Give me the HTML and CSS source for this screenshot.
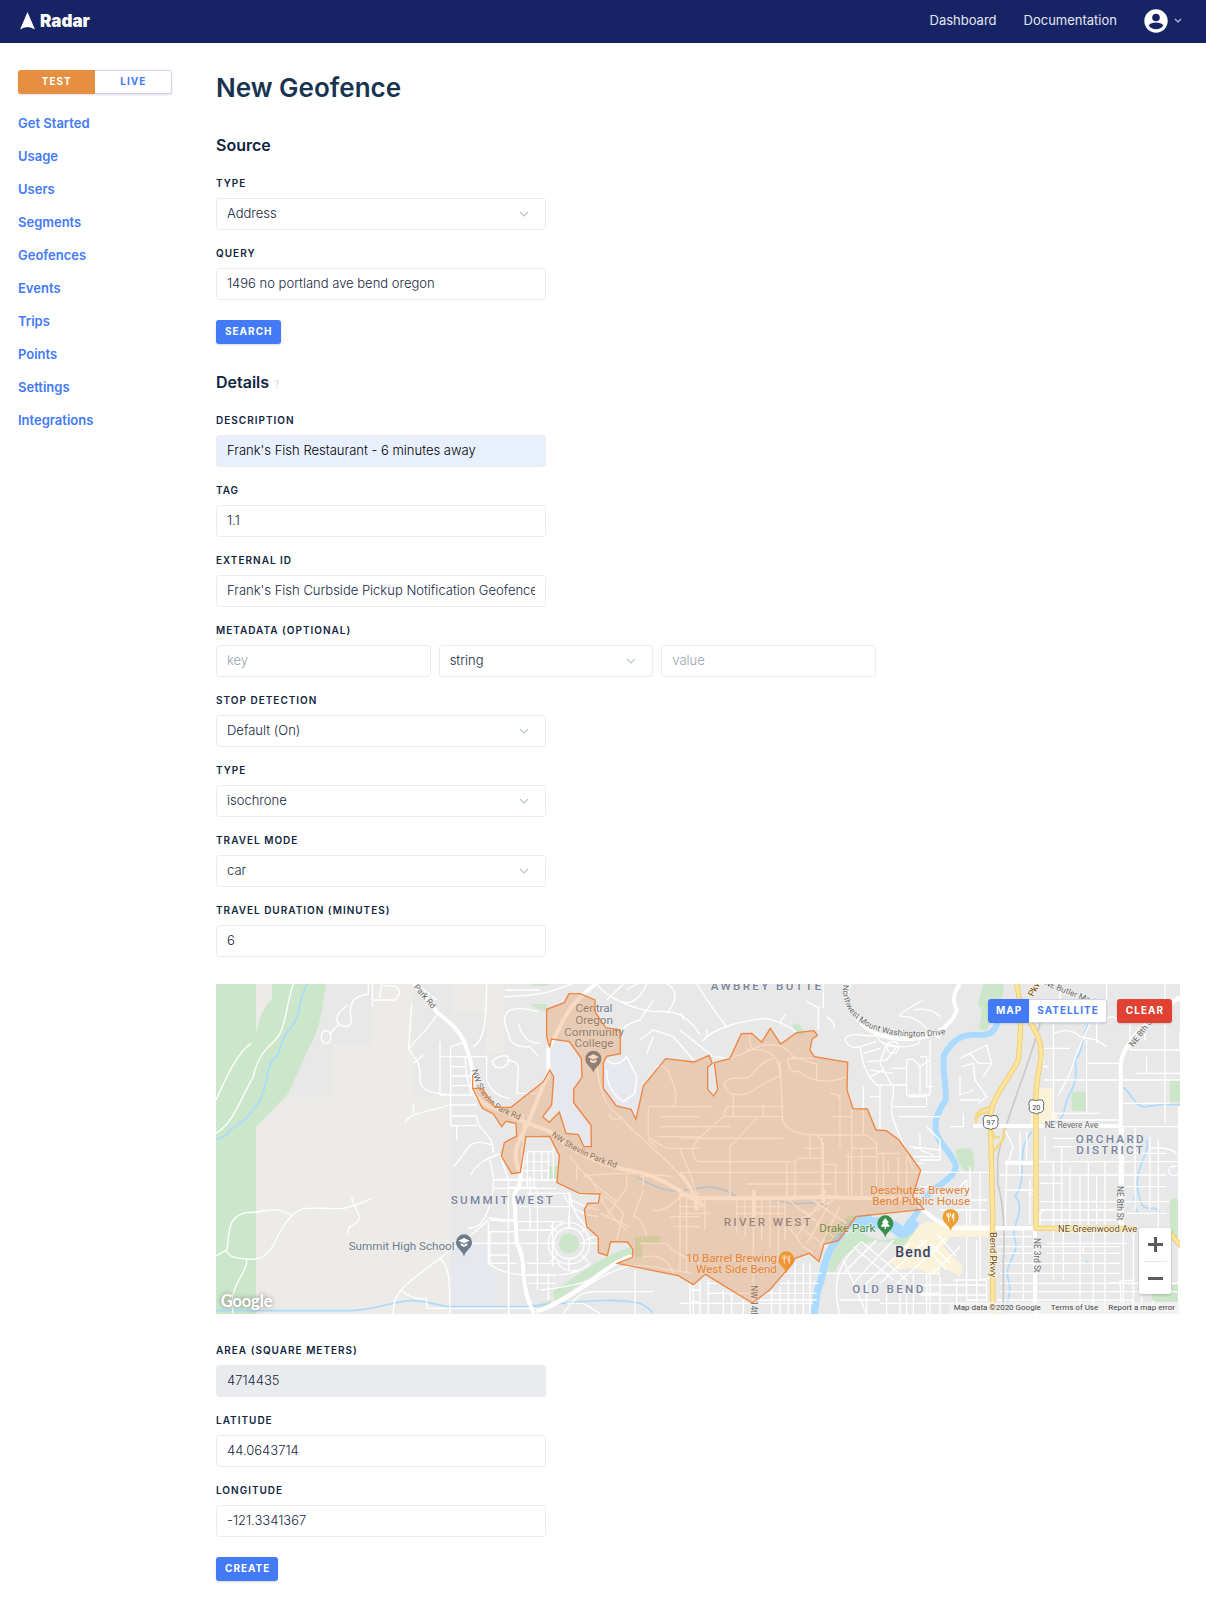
FILE: index.html
```html
<!DOCTYPE html>
<html lang="en">
<head>
  <meta charset="UTF-8" />
  <meta name="viewport" content="width=device-width, initial-scale=1.0" />
  <title>Radar - New Geofence</title>
  <link rel="stylesheet" href="styles.css">
</head>
<body>
  <header class="topbar">
    <a class="logo" href="#">
      <svg width="15" height="18" viewBox="0 0 15 18"><path d="M7.500 0L15 17.5Q7.500 12.500 0 17.500Z" fill="#fff"/></svg>
      Radar
    </a>
    <nav class="topnav">
      <a href="#">Dashboard</a>
      <a href="#">Documentation</a>
      <button class="account" aria-label="Account">
        <svg width="24" height="24" viewBox="0 0 24 24"><circle cx="12" cy="12" r="11.700" fill="#fff"/><circle cx="12" cy="8.500" r="3.800" fill="#162466"/><path d="M4.700 16.500C6 14.300 9 13.500 12 13.500s6 .8 7.300 3C17.500 19 15 20.300 12 20.300S6.500 19 4.700 16.500z" fill="#162466"/></svg>
        <svg width="8" height="5" viewBox="0 0 8 5"><path d="M1 1l3 3 3-3" fill="none" stroke="#b9bfdb" stroke-width="1.200"/></svg>
      </button>
    </nav>
  </header>

  <div class="page">
    <aside class="sidebar">
      <div class="toggle env">
        <button class="test">Test</button>
        <button>Live</button>
      </div>
      <nav class="sidenav">
        <a href="#">Get Started</a>
        <a href="#">Usage</a>
        <a href="#">Users</a>
        <a href="#">Segments</a>
        <a href="#">Geofences</a>
        <a href="#">Events</a>
        <a href="#">Trips</a>
        <a href="#">Points</a>
        <a href="#">Settings</a>
        <a href="#">Integrations</a>
      </nav>
    </aside>

    <main>
      <h1>New Geofence</h1>

      <h2>Source</h2>
      <div class="field">
        <label for="source">Type</label>
        <div class="select">
          <select id="source"><option>Address</option></select>
          <svg class="chevron" viewBox="0 0 10 6"><path d="M1 1l4 4 4-4"/></svg>
        </div>
      </div>
      <div class="field">
        <label for="query">Query</label>
        <input id="query" type="text" value="1496 no portland ave bend oregon">
      </div>
      <button class="btn">Search</button>

      <h2 class="details">Details <span class="help">?</span></h2>
      <div class="field">
        <label for="description">Description</label>
        <input id="description" class="autofilled" type="text" value="Frank's Fish Restaurant - 6 minutes away">
      </div>
      <div class="field">
        <label for="tag">Tag</label>
        <input id="tag" type="text" value="1.1">
      </div>
      <div class="field">
        <label for="externalId">External ID</label>
        <input id="externalId" type="text" value="Frank's Fish Curbside Pickup Notification Geofence">
      </div>
      <div class="field wide">
        <label for="metaKey">Metadata (optional)</label>
        <div class="metadata">
          <input id="metaKey" type="text" placeholder="key">
          <div class="select">
            <select aria-label="Metadata type"><option>string</option></select>
            <svg class="chevron" viewBox="0 0 10 6"><path d="M1 1l4 4 4-4"/></svg>
          </div>
          <input type="text" placeholder="value" aria-label="Metadata value">
        </div>
      </div>
      <div class="field">
        <label for="stopDetection">Stop Detection</label>
        <div class="select">
          <select id="stopDetection"><option>Default (On)</option></select>
          <svg class="chevron" viewBox="0 0 10 6"><path d="M1 1l4 4 4-4"/></svg>
        </div>
      </div>
      <div class="field">
        <label for="shape">Type</label>
        <div class="select">
          <select id="shape"><option>isochrone</option></select>
          <svg class="chevron" viewBox="0 0 10 6"><path d="M1 1l4 4 4-4"/></svg>
        </div>
      </div>
      <div class="field">
        <label for="mode">Travel Mode</label>
        <div class="select">
          <select id="mode"><option>car</option></select>
          <svg class="chevron" viewBox="0 0 10 6"><path d="M1 1l4 4 4-4"/></svg>
        </div>
      </div>
      <div class="field">
        <label for="duration">Travel Duration (minutes)</label>
        <input id="duration" type="text" value="6">
      </div>

      <div class="map">
        <svg class="map-canvas" viewBox="0 0 2892 990">
          <defs>
            <g id="pin"><path d="M0 64C-4 44-24 42-24 21A24 24 0 0 1 24 21C24 42 4 44 0 64z"/></g>
            <g id="cap" fill="#fff"><path d="M0 8l17 8-17 8-17-8z"/><path d="M-10 23l10 5 10-5v7q-10 8-20 0z"/></g>
            <g id="fork" stroke="#fff" stroke-width="3" fill="none"><path d="M-11 9v9q5 4 10 0V9M-6 9v25M9 34V10q-6 4-4 14h4"/></g>
          </defs>

          <!-- land, parks -->
          <rect width="2892" height="990" fill="#e8e8e8"/>
          <g transform="translate(-18 -12)">
            <path class="sand" d="M485 12H610V350H725V1002H138V440L235 350H365V195H485zM728 12h155v210H828V95H728z"/>
            <path class="park" d="M18 12H348C335 110 320 170 300 195L235 340L138 440V1002H18z"/>
            <path class="sand" d="M138 12h48v45q-35 30-48 105z"/>
            <path class="campus" d="M722 790h112v70h30v142H722z"/>
            <path class="water" d="M292 12C265 50 275 110 240 145C200 190 225 210 183 245C165 300 165 350 135 380C110 430 60 440 50 465L18 480M18 992H420C500 990 560 960 610 962C670 965 690 980 725 980H980"/>
          </g>
          <g transform="translate(672 -12)">
            <path class="campus" d="M334 177L388 185L430 240L401 340L453 436L454 500L400 470L350 400L330 280zM500 235L560 230L605 330L588 418L530 378L490 325z"/>
            <path class="park" d="M275 12h55l-10 6h-40zM272 72h48v20q-30-2-48-20zM328 558h24v42h-24zM585 770h22v62h-22zM609 768h52v25h-52zM338 935C420 880 500 820 577 800V830C500 850 400 925 345 965zM290 975l45-14-6 16-30 10z"/>
            <path class="water" d="M270 977C400 970 500 950 600 970q25 12 40 30M590 590C650 625 690 640 740 630S830 610 890 650M990 655q60 20 100 15t80 10"/>
          </g>
          <g transform="translate(1392 -12)">
            <path class="park" d="M335 135l20-4 22 28-18 10zM442 875C460 800 480 780 530 740C560 780 600 785 650 775L730 740L690 815L640 790C560 770 490 810 465 875z"/>
            <path class="park" d="M440 785l90-75-20-5-80 60z"/>
            <path class="town" d="M730 735l50-15v170l-90-30z"/>
            <path class="river" d="M402 1002C410 960 405 940 422 905C435 850 440 810 480 770C500 735 530 715 575 712" stroke-width="22"/>
            <path class="river" d="M530 722C580 735 610 720 650 745Q668 770 690 740L705 720" stroke-width="34"/>
          </g>
          <g transform="translate(2112 -12)">
            <path class="park" d="M190 12h62q0 60-55 140l-20-5 10-55-14-20zM455 335h42v58h-42zM750 298h30v68h-30zM108 508l45-4q14 25 8 70l-24 2q-30-30-29-68zM750 656h30v140l-30-30zM695 925l50-10h35v50h-85zM-10 740l18 5-12 20z"/>
            <path class="town" d="M350 325h47v75h15v30h-80v-27h18zM0 735l20-10 30 10h160v35H90L70 800l60 60-10 30L50 850-60 870l-30-20z"/>
            <path class="campus" d="M745 550l35-20v90l-30 5z"/>
            <path class="river" d="M235 120C225 160 205 165 180 165C130 160 100 175 72 225C65 270 80 310 77 360C50 400 40 430 50 460C60 500 100 520 108 560C100 600 50 610 10 660C-10 700-20 720-40 735" stroke-width="18"/>
            <path class="water" d="M520 110C480 160 495 210 465 240C475 300 460 320 445 350S440 410 405 430M335 455C300 500 310 520 305 590S270 640 295 660C310 710 270 740 285 780S250 850 265 900S250 960 270 990M608 322C640 340 640 385 680 380S730 370 780 375M680 480C690 530 640 560 655 640S700 660 720 700M645 640q-10 30 10 60"/>
            <path d="M492 840l12 5-2 5z" fill="#aadaff"/>
          </g>

          <!-- streets -->
          <g class="street" transform="translate(-18 -12)">
            <path d="M18 360C50 290 80 220 123 190M18 460C70 430 90 360 130 290C150 200 190 200 210 160S225 90 250 12M475 12V42C430 50 425 60 420 95C430 130 420 145 395 138C370 125 380 95 415 75M390 130L360 160M335 170a14 16 0 1 0 27 0a14 14 0 1 0-27 0M487 12V80M487 60H555L570 40L562 20L515 16L508 55M620 12L680 60M680 105C640 170 600 190 597 210C620 240 630 240 630 300C635 340 680 340 722 345M595 210L605 75M640 225L610 250M585 430C600 390 680 395 722 372M610 370V400M830 12C828 90 830 180 790 200M722 200L770 185M722 200V437M690 345H722M690 185V345M725 260H770M725 288H785M690 230H830M725 317H785M722 345H790M722 375H800M722 408H800M722 437H800M765 230L770 288L785 345M740 437V480M800 408C800 460 850 450 850 520M730 560C770 520 770 485 810 487L850 495M782 585C800 550 830 535 870 522L885 570L895 600V750M838 540C860 600 850 650 830 700S790 740 775 745M855 598H980M898 622H980M18 828C35 820 40 812 50 812C55 830 70 835 130 838C200 830 190 760 245 708C280 670 320 690 400 685C430 680 450 670 485 655M50 812C60 770 45 710 110 697C150 703 200 670 245 708M425 650C430 690 470 710 430 735Q410 740 415 760M110 838C115 880 50 920 70 1000M550 1002C545 930 600 905 690 835L790 760L835 720M690 835C715 860 720 880 720 1002M575 930Q600 960 650 955V985H980M835 725V850C870 880 940 890 990 885M835 755H915M780 790H915M835 825H897V1002M830 712Q890 720 915 720M960 590V750M830 230V300Q850 350 900 355M845 245a20 20 0 1 0 50-15Q870 220 845 245M890 240Q930 245 925 270L920 340H990M985 95Q850 60 895 160Q900 205 960 200L985 230M925 130Q940 190 990 190M885 30H990M940 560V400"/>
          </g>
          <g class="street" transform="translate(672 -12)">
            <path d="M190 50C270 45 300 50 400 10M470 10C500 60 600 90 640 95C700 90 740 100 780 165M550 12L500 60M590 12L560 30M620 12Q590 80 545 65M640 60Q620 90 600 120Q560 130 540 155M600 180L640 150 700 170 760 240M680 100Q730 40 680 12M640 170L620 220M500 240Q520 260 545 245L560 230L590 290 585 340 550 365Q500 330 500 270M470 250C480 350 500 380 540 410C600 480 680 530 740 610L770 650M510 400a20 12 0 1 0 40 10M625 380V480L650 500M625 380H780M660 410H780M660 440H780M650 470H780M630 475L680 505H780M650 260Q680 250 690 290Q720 350 700 380M245 500V600M262 515H340M262 515V630M282 515V620M305 515V600M325 515V600M340 500V600M245 545H330M245 572H330M160 600H350M160 625H350M260 640H390M240 680H390M235 725H370M235 750H350M292 630V930M338 725V860M388 640V740M150 755H230M150 720L230 725M145 790H350M150 755V850H230M205 755V1002M235 790H340M260 850H360M260 885H350M265 910H350M325 880V960M410 640L480 640M370 640Q390 700 475 710M395 660Q430 680 475 690M390 640Q395 700 440 740M420 790H475M430 790Q440 770 480 770M352 850Q380 880 410 870M355 885Q420 880 450 850M390 530Q440 600 530 665L560 625V580M440 580Q470 620 490 665Q510 710 560 750M470 640Q510 650 550 700L530 780M410 560V600M430 590Q470 580 600 580M490 660L440 690M480 700L570 740M530 665L500 710M610 630L580 710Q610 715 620 770M640 690Q670 700 720 650L780 640M610 580V620M600 590Q640 580 700 590M290 1000C400 960 450 900 530 870C600 840 660 870 760 880M370 1000C420 930 440 935 480 935H640M585 870V1002M750 900V1002M750 930H780M750 965H780M380 970H430L480 1000M300 930Q400 920 450 900M600 790H680Q700 820 780 850M610 830Q680 820 700 880M720 640V780M740 640V880M690 710H780M700 740H780"/>
            <circle cx="387" cy="790" r="46" fill="none"/><circle cx="387" cy="790" r="62" fill="none"/><path d="M387 708v36M387 836v36M325 790h18M433 790h30M330 735l20 20M425 755l20-20M350 825l-20 20M425 825l20 20"/>
            <circle class="park" cx="387" cy="790" r="30"/>
          </g>
          <g class="street" transform="translate(1392 -12)">
            <path d="M0 150L100 230 150 236M65 185C100 140 200 120 260 115Q320 130 350 158M80 170V150M50 12Q100 90 140 140M0 100Q10 110 10 120M430 12V85M320 100L300 125M420 85L380 65M415 85V150M440 110Q470 130 460 145M210 160Q205 180 215 205M150 236C220 210 240 190 280 195Q310 190 340 230L400 250H410V300M325 235H400M325 235Q320 280 360 275C400 320 480 300 500 290M300 240L308 420Q320 460 400 465H560L590 490V650M200 210C280 200 300 240 300 290C240 300 220 360 150 340C110 300 150 290 200 295C230 280 230 250 280 235M160 340V410M250 370V410M0 380H95M140 380H310M140 380L130 410H310M0 440H150M0 475H310M235 410L150 500V650M130 410C60 470 35 490 38 520Q45 545 60 545H345L360 530M0 577H700M0 510L30 580 50 640M200 612H460M320 545V650M345 545V650M390 470V530M370 505H425M360 535H430M425 470V640M410 465L430 490V650M430 553H467V650M480 340V505M515 387V650M550 390V465M455 410H515M450 340Q480 340 480 360M515 465V505H590M505 520V650M495 530H590M545 505V650M590 520H660M610 520V650M625 540V577M655 530V650M680 530V650M170 650V760M195 655V770M220 655V1002M245 655V780M270 655V800M295 655V840M315 655V780M0 680H70M0 700H90M75 655V750M130 840H300M0 720V870M320 655L400 720M170 680H320M170 700H320M340 730L460 660M310 720L370 800 400 820M390 655L500 730M370 690L460 770M345 730L440 800M420 665L350 770M450 670L380 790M480 680L420 800M345 850V1002M370 850V1002M390 850V1002M325 900V1002M300 920V1002M275 930V1002M40 914V1002M60 905V1002M85 900V1002M130 930V1002M155 940V1002M190 960V1002M0 970H400M80 940H210M250 940H410M300 910H415M240 960H410M80 910H120M300 880H425M440 880H780M480 1002Q440 870 545 785M545 785L680 900V1002M520 800L640 900M490 840L560 1002M490 880L590 780M520 910L640 780M560 910L690 790M600 910L740 780M650 910L780 800M480 960H600M560 910V1002M620 930V1002M660 900V1002M700 880V1002M740 880V1002M600 970H780M660 940H780M495 180Q500 160 540 165T590 165Q600 200 660 200T720 180M495 180Q510 210 540 200Q550 280 590 315H680M540 200L590 185M550 220L600 205M560 245L620 240M570 270L640 280M570 290L610 270M620 240L650 200 620 190 600 250 635 315M635 265H680V315M680 240Q700 230 720 260V340M680 240V345H750M750 180V345M685 350H740V375M640 320V345M600 315V450M550 320V387M570 350H600M640 345C620 420 660 450 700 570M640 380H740M655 410H780M720 460V505H700M690 500L780 510M700 530H780M700 550H730M720 280V260L750 240M700 577H780M730 60C660 100 640 110 680 110S740 160 780 175M700 90Q750 80 780 110"/>
            <circle cx="638" cy="202" r="18" fill="none"/>
          </g>
          <g class="street" transform="translate(2112 -12)">
            <path d="M0 230H20V320H40M20 440L60 480V540H0M0 577H210M120 235L200 195 215 250 190 290M120 235L150 220 175 250 215 250M125 260L160 250 165 300 200 350 175 370M120 290V345L160 330M130 400V440H90M120 360H180M0 510L40 525M0 620H40M370 205V250M365 260H385M400 80V430M420 12V60M365 205H450M400 160Q450 140 480 170L530 180 560 200M370 300H780M415 345Q450 290 470 220L510 130M500 180V320M500 345V400M500 250H600M400 400H540M400 420H600M500 200V345M530 190V130Q590 90 595 130M560 12V60M630 100V210M675 100V180M735 12V430M615 60H780M650 280H780M610 370H750M610 440V1002M645 440V690M690 470V690M715 480V800M690 505Q750 500 770 520M630 210H780M680 230V280M250 440H780M250 440L280 500 260 560 255 750M240 585H740M300 455V590M255 630H345M345 545H780M360 585H740M360 610H430M360 665H750M360 690H590M360 720H590M400 545V735M425 500V735M450 560V735M480 585V735M505 545V735M530 590V735M555 545V735M375 470V545M400 500H590M400 475H540M620 520H740M620 620H740M620 700H740M90 745H345M230 770H345M230 800H600M230 820H345M240 850H600M240 880H600M240 910H780M240 935H780M230 960H640M400 750V900M430 750V900M480 750V1002M520 750V1002M555 750V1002M640 760V1002M665 950V1002M700 960V1002M380 820H600M380 790H620M600 900L605 1002M560 910L640 900M330 600V735M320 455V540M345 860V1002M310 740V960M180 770V900L230 890M150 560V735M180 577V740M100 640L140 600V735M60 690H200M70 660H200M30 790L90 850M0 780L80 870M50 760L110 830M0 850L80 770M40 880L120 800M140 770V960M170 780V1002M100 900H200M0 915H200M0 945H200M60 890V1002M30 880V1002M0 970H200M110 900V1002M200 900V1002M140 960H200M360 740V700L375 690M325 640Q350 640 340 665M455 820H490V800M770 560a15 15 0 1 0 5 20M780 210V150"/>
          </g>

          <!-- arterials and highways -->
          <path d="M2480 90C2440 250 2375 380 2345 520V600Q2370 680 2362 840V990" fill="none" stroke="#c9c9c9" stroke-width="5"/>
          <g class="road" transform="translate(672 -12)">
            <path d="M-80 12L-5 100C60 150 75 170 98 270V320Q110 370 165 385L240 420 330 455Q420 540 560 570C640 580 700 620 740 645L780 655H900C1020 655 1080 655 1140 650Q1250 655 1390 655Q1420 660 1450 690L1480 715Q1520 740 1540 745H1790"/>
            <path d="M470 10Q400 60 370 120T325 205V280L265 425 230 500Q220 540 242 580L238 620Q215 640 225 680L230 790Q250 820 250 880Q255 950 282 1000"/>
            <path d="M290 995Q380 960 470 890T580 832" stroke-width="7"/>
            <path d="M720 580Q770 640 770 690M942 630V720M1150 630V670M720 640Q780 660 790 680" stroke-width="7"/>
          </g>
          <g class="road" transform="translate(2112 -12)">
            <path d="M120 12Q90 50 110 90Q95 140 30 165T-120 165C-200 130-240 60-210 12" stroke-width="9"/>
            <path d="M780 50L700 110Q600 200 602 260V745M780 380V1002" stroke-width="9"/>
            <path d="M160 438H600M255 548H345M345 745V1002M215 745H345" stroke-width="8"/>
          </g>
          <g class="highway" transform="translate(2112 -12)">
            <path class="casing" d="M290 12C310 100 300 180 295 240C250 330 200 360 212 450L218 700V1002"/>
            <path class="casing" d="M298 80C350 150 370 190 362 240C340 340 350 400 348 450V745H640M750 760L785 800"/>
            <path d="M290 12C310 100 300 180 295 240C250 330 200 360 212 450L218 700V1002"/>
            <path d="M298 80C350 150 370 190 362 240C340 340 350 400 348 450V745H640M750 760L785 800"/>
            <path class="ramp" d="M212 380Q170 390 168 410V430M250 445C260 490 230 490 218 520M215 450Q220 480 240 470M168 415Q190 390 210 400"/>
          </g>

          <!-- labels -->
          <g class="area" transform="translate(-18 -12)">
            <text x="722" y="671">SUMMIT WEST</text>
          </g>
          <g class="area" transform="translate(1392 -12)">
            <text x="92" y="29">AWBREY BUTTE</text>
            <text x="131" y="738">RIVER WEST</text>
            <text x="517" y="938">OLD BEND</text>
            <text x="1187" y="488">ORCHARD</text>
            <text x="1189" y="522">DISTRICT</text>
            <text class="city" x="646" y="830">Bend</text>
          </g>
          <g class="streetname">
            <path id="shevlin1" d="M768 258C790 350 830 385 945 418" fill="none"/>
            <path id="shevlin2" d="M1005 455Q1090 520 1225 560" fill="none"/>
            <path id="washington" d="M1881 2C1870 92 1960 192 2220 146" fill="none"/>
            <text><textPath href="#shevlin1">NW Shevlin Park Rd</textPath></text>
            <text><textPath href="#shevlin2">NW Shevlin Park Rd</textPath></text>
            <text><textPath href="#washington">Northwest Mount Washington Drive</textPath></text>
            <text transform="translate(592 10) rotate(49)">Park Rd</text>
            <text transform="translate(2484 2) rotate(22)">NE Butler Market</text>
            <text transform="translate(2752 190) rotate(-53)">NE 8th St</text>
            <text transform="translate(2704 606) rotate(90)">NE 8th St</text>
            <text transform="translate(2453 762) rotate(90)">NE 3rd St</text>
            <text transform="translate(1606 904) rotate(90)">NW 14th St</text>
            <text x="2486" y="433">NE Revere Ave</text>
            <text class="hwy" x="2526" y="743">NE Greenwood Ave</text>
            <text class="hwy" transform="translate(2322 744) rotate(90)">Bend Pkwy</text>
            <text class="hwy" transform="translate(2452 40) rotate(-62)">Pkwy</text>
          </g>
          <g class="shield">
            <path d="M2306 395h12q6 4 12 0h12q8 10 3 20 4 14-9 18-8 0-12 4-4-4-12-4-13-4-9-18-5-10 3-20z"/>
            <path d="M2443 348h12q6 4 12 0h12q8 10 3 20 4 14-9 18-8 0-12 4-4-4-12-4-13-4-9-18-5-10 3-20z"/>
            <text x="2324" y="424">97</text>
            <text x="2461" y="377">20</text>
          </g>
          <g class="poi school">
            <text x="398" y="798">Summit High School</text>
            <g class="mid">
              <text x="1134" y="85">Central</text>
              <text x="1134" y="120">Oregon</text>
              <text x="1134" y="155">Community</text>
              <text x="1134" y="189">College</text>
            </g>
            <g transform="translate(744 754)"><use href="#pin"/><use href="#cap"/></g>
            <g transform="translate(1132 203)"><use href="#pin"/><use href="#cap"/></g>
          </g>
          <g class="poi food">
            <text x="1410" y="833">10 Barrel Brewing</text>
            <text x="1440" y="867">West Side Bend</text>
            <text x="1963" y="630">Deschutes Brewery</text>
            <text x="1969" y="664">Bend Public House</text>
            <g transform="translate(1711 805)"><use href="#pin"/><use href="#fork"/></g>
            <g transform="translate(2204 678)"><use href="#pin"/><use href="#fork"/></g>
          </g>
          <g class="poi nature">
            <text x="1810" y="744">Drake Park</text>
            <g transform="translate(2008 697)"><use href="#pin"/><path d="M0 5l11 14h-5l8 12H2v7h-4v-7h-12l8-12h-5z" fill="#fff"/></g>
          </g>
          <text class="google" x="14" y="970">Google</text>

          <!-- isochrone -->
          <polygon class="geofence" transform="translate(672 -12)" points="98,285 98,325 127,385 160,402 185,440 198,424 228,430 230,468 193,488 184,528 215,581 241,577 258,470 329,469 358,526 351,608 418,640 480,642 475,669 443,670 433,688 440,740 475,772 475,818 502,827 512,785 562,786 579,808 577,832 532,850 715,887 760,914 796,883 937,969 989,930 1045,865 1065,835 1108,820 1137,845 1152,792 1195,782 1248,710 1452,688 1418,650 1442,570 1377,480 1339,452 1308,450 1282,387 1239,386 1221,330 1223,247 1123,230 1110,210 1116,178 1132,166 1122,152 1070,158 1022,192 991,145 965,187 935,160 904,161 869,236 823,248 833,328 821,348 803,328 803,262 817,250 807,226 762,246 677,236 610,318 588,418 573,388 529,378 490,325 490,248 500,229 541,221 541,150 497,143 465,95 465,60 420,41 387,41 373,68 320,88 320,170 329,202 334,177 388,185 424,235 426,292 401,327 401,368 453,436 454,500 432,500 415,464 378,460 358,396 328,427 308,410 335,375 341,290 329,270 310,305 213,382 165,382 127,325 98,325"/>
        </svg>
        <div class="map-tools">
          <div class="toggle">
            <button class="active">Map</button>
            <button>Satellite</button>
          </div>
          <button class="btn danger">Clear</button>
        </div>
        <div class="zoom">
          <button aria-label="Zoom in"><svg width="15" height="15" viewBox="0 0 15 15"><path d="M7.500 0v15M0 7.500h15"/></svg></button>
          <button aria-label="Zoom out"><svg width="15" height="15" viewBox="0 0 15 15"><path d="M0 7.500h15"/></svg></button>
        </div>
        <div class="attribution">
          <span>Map data ©2020 Google</span>
          <a href="#">Terms of Use</a>
          <a href="#">Report a map error</a>
        </div>
      </div>

      <div class="field">
        <label for="area">Area (square meters)</label>
        <input id="area" type="text" value="4714435" disabled>
      </div>
      <div class="field">
        <label for="latitude">Latitude</label>
        <input id="latitude" type="text" value="44.0643714">
      </div>
      <div class="field">
        <label for="longitude">Longitude</label>
        <input id="longitude" type="text" value="-121.3341367">
      </div>
      <button class="btn">Create</button>
    </main>
  </div>
</body>
</html>
```
FILE: styles.css
```css
* {
  box-sizing: border-box;
}
body {
  margin: 0;
  font-family: Inter, "Liberation Sans", sans-serif;
  font-size: 13px;
  color: #0f2540;
  background: #fff;
}
a {
  text-decoration: none;
}
button, input, select {
  font-family: inherit;
}
button {
  border: 0;
  padding: 0;
  background: none;
  cursor: pointer;
}
.topbar {
  display: flex;
  justify-content: space-between;
  align-items: center;
  height: 43px;
  padding: 0 24px 2px 20px;
  background: #162466;
}
.logo {
  display: flex;
  align-items: center;
  gap: 5px;
  color: #fff;
  font-size: 17px;
  font-weight: 900;
}
.topnav {
  display: flex;
  align-items: center;
  gap: 27px;
}
.topnav a {
  padding-bottom: 2px;
  color: #e4e7f3;
}
.account {
  display: flex;
  align-items: center;
  gap: 6px;
}
.page {
  display: flex;
  gap: 44px;
  padding: 27px 26px 19px 18px;
}
.sidebar {
  flex: 0 0 154px;
}
.toggle {
  display: flex;
  height: 24px;
  background: #fff;
  border: 1px solid #cfd6e4;
  border-radius: 3px;
  box-shadow: 0 1px 2px rgba(30, 50, 90, 0.15);
}
.toggle button, .btn {
  font-size: 10px;
  font-weight: 700;
  letter-spacing: 1px;
  text-transform: uppercase;
}
.toggle button {
  padding: 0 7px 2px 8px;
  color: #427af8;
}
.env button {
  flex: 1;
}
.toggle .test, .toggle .active {
  margin: -1px 0 -1px -1px;
  color: #fff;
  background: #e78f40;
  border-radius: 3px 0 0 3px;
}
.toggle .active {
  background: #427af8;
}
.sidenav {
  display: flex;
  flex-direction: column;
  gap: 13px;
  margin-top: 19px;
}
.sidenav a {
  line-height: 20px;
  font-weight: 600;
  color: #427af8;
}
main {
  flex: 1;
  min-width: 0;
}
h1 {
  margin: 0 0 29px;
  padding-top: 2px;
  font-size: 26px;
  line-height: 32px;
  font-weight: 600;
  color: #17334f;
}
h2 {
  margin: 0 0 18px;
  font-size: 16px;
  line-height: 24px;
  font-weight: 600;
}
.details {
  margin-top: 26px;
}
.help {
  margin-left: 1px;
  font-size: 10px;
  line-height: 1;
  font-weight: 300;
  color: #c3cbd5;
}
.field {
  max-width: 330px;
  margin-bottom: 15px;
}
.wide {
  max-width: 660px;
}
.field label {
  display: block;
  margin-bottom: 7px;
  font-size: 10px;
  line-height: 16px;
  font-weight: 600;
  letter-spacing: 1px;
  text-transform: uppercase;
}
.field input, .field select {
  display: block;
  width: 100%;
  height: 32px;
  padding: 0 10px 2px;
  font-size: 13px;
  font-weight: 300;
  color: #17283f;
  background: #fff;
  border: 1px solid #eaedf0;
  border-radius: 3px;
}
.field select {
  appearance: none;
}
.field input::placeholder {
  color: #98a2b0;
}
.field .autofilled {
  color: #000;
  background: #e8f0fe;
}
.field input:disabled {
  background: #eaebee;
}
.select {
  position: relative;
}
.chevron {
  position: absolute;
  top: 13px;
  right: 17px;
  width: 10px;
  height: 6px;
  pointer-events: none;
  fill: none;
  stroke: #bac7d3;
  stroke-width: 1.2;
}
.metadata {
  display: grid;
  grid-template-columns: repeat(3, 1fr);
  gap: 8px;
}
.btn {
  display: block;
  height: 24px;
  margin-top: 20px;
  padding: 0 8px 2px 9px;
  color: #fff;
  background: #427af8;
  border-radius: 3px;
  box-shadow: 0 1px 2px rgba(30, 50, 90, 0.2);
}
.danger {
  margin: 0;
  background: #e04132;
}

/* map */
.map {
  position: relative;
  margin: 27px 0 28px;
}
.map-canvas {
  display: block;
  width: 100%;
  font-family: Roboto, sans-serif;
}
.sand { fill: #ecebe7; }
.park { fill: #cbe6c8; stroke: none; }
.campus { fill: #e6e8ee; }
.town { fill: #faf3da; }
.water { fill: none; stroke: #aadaff; stroke-width: 5; }
.river { fill: none; stroke: #aadaff; stroke-linejoin: round; }
.street path, .street circle {
  stroke: #fff;
  stroke-width: 4;
  stroke-linejoin: round;
}
.street path { fill: none; }
.street .park { stroke: none; }
.road path {
  fill: none;
  stroke: #fff;
  stroke-width: 12;
  stroke-linejoin: round;
}
.highway path {
  fill: none;
  stroke: #fce59a;
  stroke-width: 11;
  stroke-linejoin: round;
}
.highway .casing {
  stroke: #edca72;
  stroke-width: 16;
}
.highway .ramp {
  stroke: #f5d883;
  stroke-width: 8;
}
.map-canvas text {
  paint-order: stroke;
  stroke-linejoin: round;
}
.area text {
  font-size: 35px;
  font-weight: 500;
  letter-spacing: 7px;
  fill: #78849f;
  stroke: #eee;
  stroke-width: 5px;
}
.area .city {
  font-size: 42px;
  letter-spacing: 3px;
  fill: #3c4257;
}
.streetname text {
  font-size: 25px;
  fill: #686868;
  stroke: #f2f2f2;
  stroke-width: 5px;
}
.streetname .hwy {
  font-size: 28px;
  fill: #6b4a1c;
  stroke: #fff6dc;
}
.shield path {
  fill: #fff;
  stroke: #666;
  stroke-width: 3;
}
.shield text {
  font-size: 22px;
  text-anchor: middle;
  fill: #444;
}
.poi text {
  font-size: 35px;
  stroke: #f0f0f0;
  stroke-width: 4px;
}
.mid text { text-anchor: middle; }
.school { fill: #6b7c8a; }
.food { fill: #e48130; }
.food use { fill: #efa032; }
.food use:last-child { fill: none; }
.nature { fill: #398f4d; }
.map-canvas .google {
  font-family: Lato, sans-serif;
  font-size: 49px;
  font-weight: 700;
  fill: #fff;
  text-shadow: 0 0 5px #777;
}
.geofence {
  fill: #e8873b;
  fill-opacity: 0.3;
  stroke: #ee8540;
  stroke-width: 4;
}
.map-tools {
  position: absolute;
  top: 15px;
  right: 8px;
  display: flex;
  gap: 10px;
}
.zoom {
  position: absolute;
  right: 9px;
  bottom: 20px;
  width: 32px;
  padding: 0 4px;
  background: #fff;
  border-radius: 2px;
  box-shadow: 0 1px 3px rgba(0, 0, 0, 0.2);
}
.zoom button {
  display: flex;
  align-items: center;
  justify-content: center;
  width: 100%;
  height: 33px;
}
.zoom button + button {
  border-top: 1px solid #e6e6e6;
}
.zoom path {
  stroke: #5c5c5c;
  stroke-width: 3;
}
.attribution {
  position: absolute;
  right: 0;
  bottom: 0;
  display: flex;
  gap: 10px;
  padding: 0 5px;
  font-family: Roboto, sans-serif;
  font-size: 8px;
  line-height: 12px;
  background: rgba(245, 245, 245, 0.7);
}
.attribution, .attribution a {
  color: #444;
}
```
